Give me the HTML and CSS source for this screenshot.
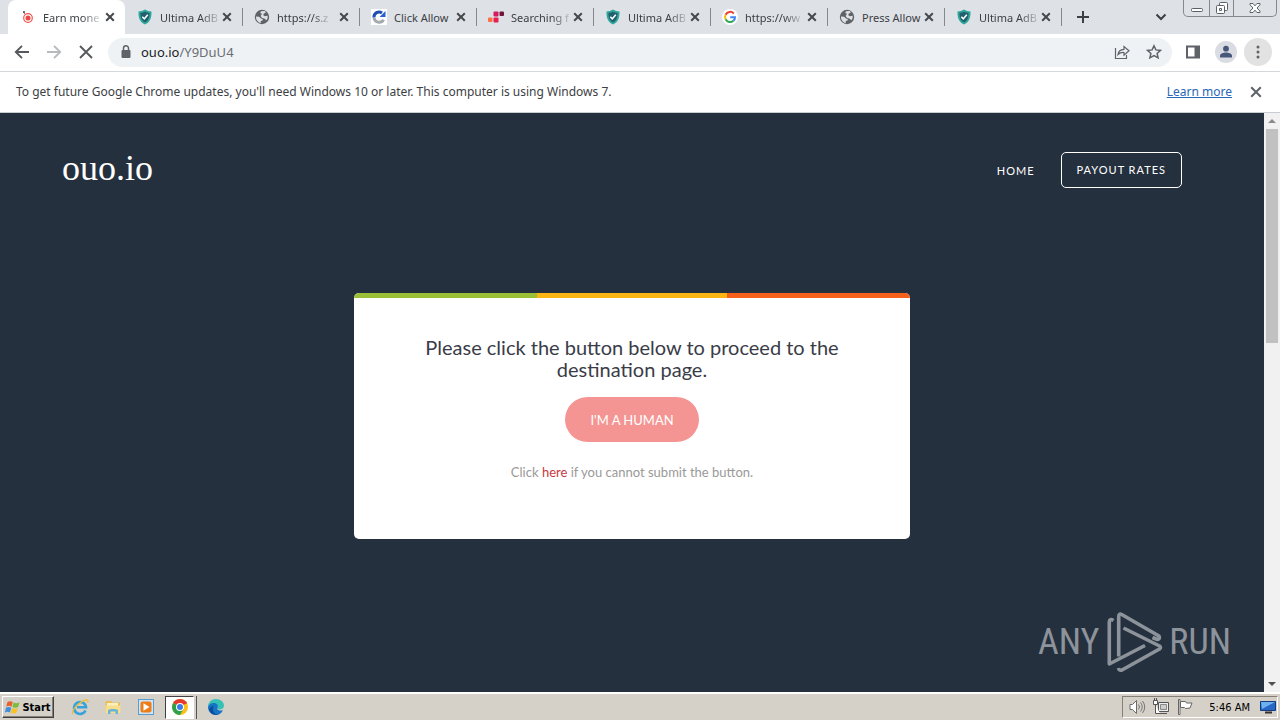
FILE: index.html
```html
<!DOCTYPE html>
<html lang="en">
<head>
<meta charset="utf-8">
<meta name="viewport" content="width=device-width, initial-scale=1">
<title>Earn money</title>
<link rel="stylesheet" href="styles.css">
</head>
<body>
<svg class="defs" aria-hidden="true">
  <symbol id="x" viewBox="0 0 16 16"><path d="M4.2 4.2l7.6 7.6M11.8 4.2l-7.6 7.6" fill="none" stroke="currentColor" stroke-width="2"/></symbol>
  <symbol id="shield" viewBox="0 0 16 16"><path d="M8 .6C6 2 3.700 2.400 1.500 2.500 1.200 8.500 3 13.200 8 15.600c5-2.400 6.800-7.100 6.500-13.100C12.300 2.400 10 2 8 .6z" fill="#2fa79b"/><path d="M8 2.500C6.500 3.500 5 3.900 3.400 4 3.300 8.300 4.600 11.700 8 13.600c3.400-1.900 4.700-5.300 4.600-9.600C11 3.900 9.500 3.500 8 2.500z" fill="#22606f"/><path d="M5.300 7.800l2 2 3.500-4" fill="none" stroke="#fff" stroke-width="1.500"/></symbol>
  <symbol id="globe" viewBox="0 0 16 16"><circle cx="8" cy="8" r="7.200" fill="#5f6368"/><path d="M2 7.500l3 .2 2 1.800 1.800.5-.3 1.500-1.700.6v1.800C3.800 13.500 1.900 10.900 2 7.500zM6.800 2.200l4.200-.1.700 1.700-2 .8-.4 1.700 1.600.9 2.700-.4c.4 2-.2 3.400-1.200 4.500l-2-1.800-2.300-.6-1.500-1.900 1.500-2.200-1.700-.5z" fill="#dee1e6"/></symbol>
</svg>

<header class="browser">
  <div class="tabstrip">
    <div class="tabs">
      <div class="tab active"><svg class="fav" viewBox="0 0 16 16"><circle cx="8" cy="9" r="4.300" fill="#fff" stroke="#ef5350" stroke-width="1.200"/><circle cx="8" cy="9" r="2.500" fill="#ef4444"/><path d="M3 3l2 2" stroke="#ef5350"/><circle cx="4" cy="3" r="1" fill="#3c4660"/></svg><span class="fade">Earn mone</span><button aria-label="Close tab"><svg><use href="#x"/></svg></button></div>
      <div class="tab"><svg class="fav"><use href="#shield"/></svg><span class="fade">Ultima AdB</span><button aria-label="Close tab"><svg><use href="#x"/></svg></button></div>
      <div class="tab"><svg class="fav"><use href="#globe"/></svg><span class="fade">https://s.z</span><button aria-label="Close tab"><svg><use href="#x"/></svg></button></div>
      <div class="tab"><svg class="fav" viewBox="0 0 16 16"><path d="M0 0h16v16H0z" fill="#fff"/><path d="M3 8.500A5 5 0 0 1 11 4" fill="none" stroke="#1e4fb5" stroke-width="3"/><path d="M14.500 2v6H8.500z" fill="#2b5fd0"/><path d="M3 8.600a5.200 5.200 0 0 0 9.600 2.200" fill="none" stroke="#a4a9b0" stroke-width="3"/></svg><span>Click Allow</span><button aria-label="Close tab"><svg><use href="#x"/></svg></button></div>
      <div class="tab"><svg class="fav" viewBox="0 0 16 16"><rect x="5.500" y="2.500" width="5" height="5" rx="1" fill="#d81b60"/><rect x="11.500" y="2.500" width="4.500" height="4.500" rx="1" fill="#70163c"/><rect x="0" y="8.500" width="4.500" height="4.500" rx="1" fill="#ff7043"/><rect x="5.500" y="8.500" width="5" height="5" rx="1" fill="#e91e50"/></svg><span class="fade">Searching f</span><button aria-label="Close tab"><svg><use href="#x"/></svg></button></div>
      <div class="tab"><svg class="fav"><use href="#shield"/></svg><span class="fade">Ultima AdB</span><button aria-label="Close tab"><svg><use href="#x"/></svg></button></div>
      <div class="tab"><svg class="fav" viewBox="0 0 16 16"><circle cx="8" cy="8" r="8" fill="#fff"/><g fill="none" stroke-width="2"><path d="M11.800 4.500A5 5 0 0 0 3.600 5.700" stroke="#ea4335"/><path d="M3.600 5.700a5 5 0 0 0 0 4.600" stroke="#fbbc05"/><path d="M3.600 10.300a5 5 0 0 0 7.800 1.500" stroke="#34a853"/><path d="M11.400 11.800A4.800 4.800 0 0 0 13 8.200H8.200" stroke="#4285f4"/></g></svg><span class="fade">https://ww</span><button aria-label="Close tab"><svg><use href="#x"/></svg></button></div>
      <div class="tab"><svg class="fav"><use href="#globe"/></svg><span>Press Allow</span><button aria-label="Close tab"><svg><use href="#x"/></svg></button></div>
      <div class="tab"><svg class="fav"><use href="#shield"/></svg><span class="fade">Ultima AdB</span><button aria-label="Close tab"><svg><use href="#x"/></svg></button></div>
    </div>
    <button class="newtab" aria-label="New tab"><svg viewBox="0 0 16 16"><path d="M8 2v12M2 8h12" fill="none" stroke="#3c4043" stroke-width="2"/></svg></button>
    <button class="tabsearch" aria-label="Search tabs"><svg viewBox="0 0 16 16"><path d="M3.500 5.500L8 10l4.500-4.500" fill="none" stroke="#3c4043" stroke-width="2"/></svg></button>
    <div class="winctl">
      <button class="min" aria-label="Minimize"><svg viewBox="0 0 16 16"><rect x="2.500" y="8.500" width="11" height="3" rx="1" fill="#fff" stroke="#5b5f66"/></svg></button>
      <button class="max" aria-label="Restore"><svg viewBox="0 0 16 16"><g fill="#fff" stroke="#5b5f66"><rect x="5.500" y="2.500" width="8" height="8" rx="1"/><rect x="2.500" y="5.500" width="8" height="8" rx="1"/><path d="M5.500 8.500h2v2h-2z"/></g></svg></button>
      <button class="cls" aria-label="Close"><svg viewBox="0 0 16 16"><path d="M3 3.500h3l2 2.300 2-2.300h3v1.300L10 8l3 3.200v1.300h-3l-2-2.300-2 2.300H3v-1.300L6 8 3 4.800z" fill="#fff" stroke="#5b5f66"/></svg></button>
    </div>
  </div>

  <div class="toolbar">
    <button aria-label="Back"><svg viewBox="0 0 16 16"><path d="M15 8H2M8 1.800L1.800 8 8 14.200" fill="none" stroke="#55585c" stroke-width="1.900"/></svg></button>
    <button aria-label="Forward"><svg viewBox="0 0 16 16"><path d="M1 8h13M8 1.800L14.200 8 8 14.200" fill="none" stroke="#b8babd" stroke-width="1.900"/></svg></button>
    <button aria-label="Stop"><svg viewBox="0 0 16 16"><path d="M2 2l12 12M14 2L2 14" fill="none" stroke="#55585c" stroke-width="1.900"/></svg></button>
    <div class="omnibox">
      <svg class="lock" viewBox="0 0 16 16"><rect x="3.500" y="6" width="9" height="8" rx="1" fill="#5f6368"/><path d="M5.500 6.500V4.300a2.500 2.500 0 0 1 5 0v2.200" fill="none" stroke="#5f6368" stroke-width="1.500"/></svg>
      <a class="url" href="#"><b>ouo.io</b>/Y9DuU4</a>
      <button aria-label="Share"><svg viewBox="0 0 16 16"><path d="M1.500 4v10.500h11V11M4 10.500c.5-3.500 2.500-5 6-5.200V2.500l5 4.300-5 4.300V8.500C7.500 8.300 5.500 9 4 10.500z" fill="none" stroke="#5f6368" stroke-width="1.200"/></svg></button>
      <button aria-label="Bookmark"><svg viewBox="0 0 16 16"><path d="M8 1.800l1.900 4.100 4.600.5-3.400 3 1 4.500L8 11.600l-4.100 2.300 1-4.500-3.400-3 4.600-.5z" fill="none" stroke="#5f6368" stroke-width="1.500"/></svg></button>
    </div>
    <button class="panel" aria-label="Side panel"><svg viewBox="0 0 16 16"><path d="M2 2.500h12v11H2z" fill="none" stroke="#5f6368" stroke-width="2"/><path d="M9.500 2H15v12H9.500z" fill="#5f6368"/></svg></button>
    <button class="profile" aria-label="Profile"><svg viewBox="0 0 22 22"><circle cx="11" cy="11" r="11" fill="#dadce3"/><circle cx="11" cy="7.700" r="2.900" fill="#47577a"/><path d="M5 16.500v-1.700c0-2 3.500-3.200 6-3.200s6 1.200 6 3.200v1.700z" fill="#47577a"/></svg></button>
    <button class="menu" aria-label="Menu"><svg viewBox="0 0 16 16"><g fill="#5f6368"><circle cx="8" cy="3" r="1.500"/><circle cx="8" cy="8" r="1.500"/><circle cx="8" cy="13" r="1.500"/></g></svg></button>
  </div>

  <div class="infobar">
    <p>To get future Google Chrome updates, you'll need Windows 10 or later. This computer is using Windows 7.</p>
    <a href="#">Learn more</a>
    <button aria-label="Dismiss"><svg viewBox="0 0 16 16"><path d="M3.200 3.200l9.600 9.600M12.800 3.200l-9.600 9.600" fill="none" stroke="#5f6368" stroke-width="2"/></svg></button>
  </div>
</header>

<div class="viewport">
  <main class="page">
    <div class="site-head">
      <a class="brand" href="#">ouo.io</a>
      <nav><a href="#">HOME</a><a class="boxed" href="#">PAYOUT RATES</a></nav>
    </div>
    <section class="card">
      <div class="stripe"><i></i><i></i><i></i></div>
      <h1>Please click the button below to proceed to the destination page.</h1>
      <button class="human">I'M A HUMAN</button>
      <p>Click <a href="#">here</a> if you cannot submit the button.</p>
    </section>
    <div class="watermark">
      <span>ANY</span>
      <svg viewBox="0 0 58 64"><g fill="none" stroke="#8d939b" stroke-width="3.600" stroke-linejoin="round"><path d="M8.500 10.500Q4.300 8 4.300 12V54L40 35.500"/><path d="M13.700 46.500V7q0-4 3-2.500L54 26q1.500 3-1.500 3.500l-5-2"/><path d="M18.500 18L54.500 36q2 1.500 0 3L17 60q-3 1-3.500-2"/></g></svg>
      <span>RUN</span>
    </div>
  </main>
  <div class="scroll"><button class="up" aria-label="Scroll up"></button><div class="thumb"></div><button class="down" aria-label="Scroll down"></button></div>
</div>

<footer class="taskbar">
  <button class="start"><svg viewBox="0 0 16 16"><path d="M2.500 3c2-1.200 3.500-1 5.300 0l-1.300 4.700c-1.800-1-3.300-1.200-5.300 0z" fill="#e8602c"/><path d="M8.700 3.400c2 1 3.500 1 5.800-.2l-1.400 4.900c-2 1-3.700 1-5.700 0z" fill="#7dbb3c"/><path d="M1 8.800c2-1.100 3.500-1 5.200 0l-1.300 4.600c-1.700-1-3.200-1-5 .1z" fill="#3d8ede"/><path d="M7.100 9.100c2 1 3.600 1 5.700 0l-1.400 4.700c-2 1-3.600.8-5.600-.1z" fill="#f7c325"/></svg>Start</button>
  <div class="quick">
    <button aria-label="Internet Explorer"><svg viewBox="0 0 18 18"><path d="M14.500 12.500A6 6 0 1 1 15 9.200H6" fill="none" stroke="#36a3dc" stroke-width="2.600"/><path d="M1.800 16C0 13 8 3.500 15 2c2-.3 2.300 1 1.500 2.600" fill="none" stroke="#efbd3e" stroke-width="1.300"/></svg></button>
    <button aria-label="Explorer"><svg viewBox="0 0 18 18"><path d="M1.500 3h6l1 1.500H16V14H1.500z" fill="#e8bf57"/><path d="M3 5h11v5H3z" fill="#f8eec0"/><path d="M1.500 7.500h15V15h-15z" fill="#f7de8c"/><path d="M4 16v-3.500c0-2 10-2 10 0V16h-2.500v-2.500h-5V16z" fill="#69b3d6"/></svg></button>
    <button aria-label="Media Player"><svg viewBox="0 0 18 18"><rect x="1.500" y="1.500" width="15" height="15" fill="#cfe4f7" stroke="#5b9bd0"/><rect x="3.500" y="3.500" width="11" height="11" rx="2" fill="#ee7d16"/><path d="M6.500 5.200L12.500 9l-6 3.800z" fill="#fff"/></svg></button>
    <button class="pressed" aria-label="Chrome"><svg viewBox="0 0 18 18"><circle cx="9" cy="9" r="8" fill="#fbc116"/><path d="M9 9L2.100 5A8 8 0 0 1 15.900 5z" fill="#e33b2e"/><path d="M9 9L2.100 5A8 8 0 0 0 9 17l3.500-6z" fill="#2da14c"/><path d="M9 5h6.900" stroke="#e33b2e" stroke-width="1"/><circle cx="9" cy="9" r="4" fill="#fff"/><circle cx="9" cy="9" r="3" fill="#3b7de8"/></svg></button>
    <button aria-label="Edge"><svg viewBox="0 0 18 18"><path d="M1 9C1 4.500 4.500 1 9 1s8 3 8 6.500c0 2.500-2 4-4.500 4-2 0-2.500-1-2-1.700.8-1.500-.5-3.300-3-3.300C4 6.500 1.500 8 1 9z" fill="#35c1b5"/><path d="M1 9c.5-2.500 3.500-4.500 6.500-4 3 .3 4 3.200 3 4.800-1 1.700 1.500 3.700 5.500 2.200C14.500 15.500 12 17 9 17c-4.500 0-8-3.500-8-8z" fill="#1673c5"/><path d="M6 10c-.7 4 2 6.500 5.500 6.500-3 1.300-8.500-.5-9.500-5 .5-2 2-3 4.500-3.500z" fill="#0b4d9b"/></svg></button>
  </div>
  <div class="tray">
    <svg viewBox="0 0 18 18"><path d="M2 6.500h2.500L8.500 2.500v13l-4-4H2z" fill="#fff" stroke="#6b6b6b"/><path d="M10.500 6.500q2 2.500 0 5M12.500 4.500q3.500 4.500 0 9M14.500 3q4.500 6 0 12" fill="none" stroke="#777"/></svg>
    <svg viewBox="0 0 18 18"><path d="M6.500 4.500h10v9h-10zM8 15.500h7" fill="#eee" stroke="#555"/><path d="M8.500 6.500h6v5h-6z" fill="#ccc" stroke="#888"/><path d="M1.500 2.500h4v4h-4zM3.500 6.500v9H8M2.500 2V0M4.500 2V0" fill="#fff" stroke="#555"/></svg>
    <svg viewBox="0 0 18 18"><path d="M2.500 1.500h1.500v15H2.500z" fill="#fff" stroke="#666"/><path d="M4.500 3.500h5l1 1.500H16l-2 5-4.500.5-1-1h-4z" fill="#fff" stroke="#666"/></svg>
    <time>5:46 AM</time>
    <svg viewBox="0 0 18 18"><path d="M1.500 3.500h15v9h-15z" fill="#2867c4" stroke="#143b80"/><path d="M2 4h14L3 11z" fill="#6eb1f0"/><path d="M6 14.500h7" stroke="#333" stroke-width="2"/></svg>
  </div>
</footer>
</body>
</html>
```
FILE: styles.css
```css
* { box-sizing: border-box; }
html, body { height: 100%; }
body {
  margin: 0;
  display: flex;
  flex-direction: column;
  min-height: 100vh;
  overflow: hidden;
  font-family: "Noto Sans", sans-serif;
  font-size: 12px;
  color: #3c4043;
}
button { border: 0; padding: 0; background: none; font: inherit; color: inherit; display: flex; align-items: center; justify-content: center; flex: none; }
svg { display: block; flex: none; width: 16px; height: 16px; }
p, h1 { margin: 0; }
.defs { position: absolute; width: 0; height: 0; }

/* Tab strip */
.tabstrip { display: flex; align-items: center; height: 34px; background: #dee1e6; padding-left: 8px; }
.tabs { display: flex; height: 34px; font-size: 11px; }
.tab { display: flex; align-items: center; width: 117px; padding: 0 7px 0 12px; position: relative; }
.tab::after { content: ""; position: absolute; right: -1px; top: 8px; width: 1px; height: 18px; background: #85888d; }
.tab.active::after { display: none; }
.tab span { margin: 0 auto 0 7px; white-space: nowrap; }
.tab .fade { -webkit-mask-image: linear-gradient(to right, #000 70%, rgba(0, 0, 0, .2)); mask-image: linear-gradient(to right, #000 70%, rgba(0, 0, 0, .2)); }
.tab.active { background: #fff; border-radius: 8px 8px 0 0; }
.tab svg { color: #45494d; }
.newtab { margin-left: 14px; }
.tabsearch { margin-left: auto; }
.winctl { display: flex; align-self: flex-start; height: 17px; margin: 0 3px 0 14px; border: 1px solid #85888f; border-top: 0; border-radius: 0 0 5px 5px; }
.winctl .min { width: 25px; }
.winctl .max { width: 25px; border: solid #85888f; border-width: 0 1px; }
.winctl .cls { width: 42px; }

/* Toolbar */
.toolbar { display: flex; align-items: center; height: 38px; background: #fff; border-bottom: 1px solid #d5d8db; padding: 0 8px 1px 14px; gap: 16px; }
.omnibox { display: flex; align-items: center; flex: 1; height: 29px; margin-left: -2px; border-radius: 15px; background: #eff2f5; padding: 0 10px; }
.omnibox button { margin-left: 16px; }
.lock { margin-right: 7px; }
.url { flex: 1; font-size: 13px; color: #6a6e73; text-decoration: none; }
.url b { font-weight: 400; color: #202124; }
.panel { margin-left: -3px; }
.profile { margin-left: -2px; }
.profile svg { width: 22px; height: 22px; }
.menu { width: 28px; height: 28px; border-radius: 50%; background: #e2e2e3; margin-left: -9px; }

/* Update notice */
.infobar { display: flex; align-items: center; height: 41px; background: #fff; padding: 0 16px 1px; border-bottom: 1px solid #c9cdd1; }
.infobar p { flex: 1; }
.infobar a { color: #2a67b5; margin-right: 16px; }

/* Page */
.viewport { flex: 1; display: flex; min-height: 0; }
.page { flex: 1; position: relative; background: #25303e; font-family: Lato, sans-serif; }
.site-head { display: flex; align-items: flex-end; justify-content: space-between; padding: 35px 82px 0 62px; }
.brand { font-family: "Liberation Serif", serif; font-size: 36px; line-height: 40px; color: #fff; text-decoration: none; }
nav { display: flex; align-items: center; gap: 26px; }
nav a { color: #fff; font-size: 11px; letter-spacing: 1px; text-decoration: none; }
nav .boxed { border: 1px solid #fff; border-radius: 5px; padding: 0 15px; line-height: 34px; }
.card { width: 44%; min-width: 320px; margin: 105px auto 0; border-radius: 5px; overflow: hidden; background: #fff; padding-bottom: 57px; text-align: center; }
.stripe { display: grid; grid-template-columns: 33% 34% 33%; height: 5px; }
.stripe i:nth-child(1) { background: #9bc038; }
.stripe i:nth-child(2) { background: #fcb614; }
.stripe i:nth-child(3) { background: #f6601a; }
.card h1 { margin: 38px 60px 17px; font-size: 20px; line-height: 22px; font-weight: 400; color: #3a3c48; }
.human { margin: 0 auto; height: 45px; padding: 0 25px; border-radius: 23px; background: #f49593; color: #fff; font-size: 13px; }
.card p { margin-top: 20px; font-size: 13px; line-height: 20px; color: #999; }
.card p a { color: #c8383f; text-decoration: none; }
.watermark { position: absolute; right: 33px; bottom: 18px; display: flex; align-items: center; gap: 6px; color: #8d939b; font-family: "Liberation Sans Narrow", "Roboto Condensed", "Liberation Sans", sans-serif; font-size: 36px; }
.watermark svg { width: 58px; height: 64px; }

/* Scrollbar */
.scroll { width: 16px; background: #f1f1f1; display: flex; flex-direction: column; padding: 0 2px 0 2px; }
.scroll button { height: 16px; }
.scroll .up::before, .scroll .down::before { content: ""; border: 4px solid transparent; }
.scroll .up::before { border-bottom-color: #8b8b8b; border-top: 0; }
.scroll .down::before { border-top-color: #505050; border-bottom: 0; }
.thumb { height: 37%; min-height: 20px; background: #c1c1c1; margin-bottom: auto; }

/* Taskbar */
.taskbar { display: flex; align-items: center; height: 28px; background: #d5d0c8; border-top: 2px solid #fff; padding: 0 2px 0 2px; }
.start { width: 52px; height: 22px; gap: 1px; font-family: "DejaVu Sans Condensed", "DejaVu Sans", sans-serif; font-size: 11px; font-weight: 700; color: #000; border: 1px solid; border-color: #fff #404040 #404040 #fff; box-shadow: inset -1px -1px #848078; }
.quick { display: flex; align-items: center; flex: 1; margin-left: 9px; }
.quick button { width: 33px; height: 23px; }
.quick svg { width: 18px; height: 18px; }
.quick .pressed { width: 29px; margin: 0 5px 0 3px; background: #fff; border: 1px solid; border-color: #404040 #fff #fff #404040; box-shadow: 2px 0 #d5d0c8, 3px 0 #555; }
.tray { display: flex; align-items: center; height: 22px; gap: 6px; padding: 0 0 0 5px; border: 1px solid; border-color: #848078 #fff #fff #848078; }
.tray svg { width: 18px; height: 18px; }
.tray time { margin: 0 3px 0 9px; font-size: 11px; color: #000; font-family: "DejaVu Sans Condensed", "DejaVu Sans", sans-serif; }
```
